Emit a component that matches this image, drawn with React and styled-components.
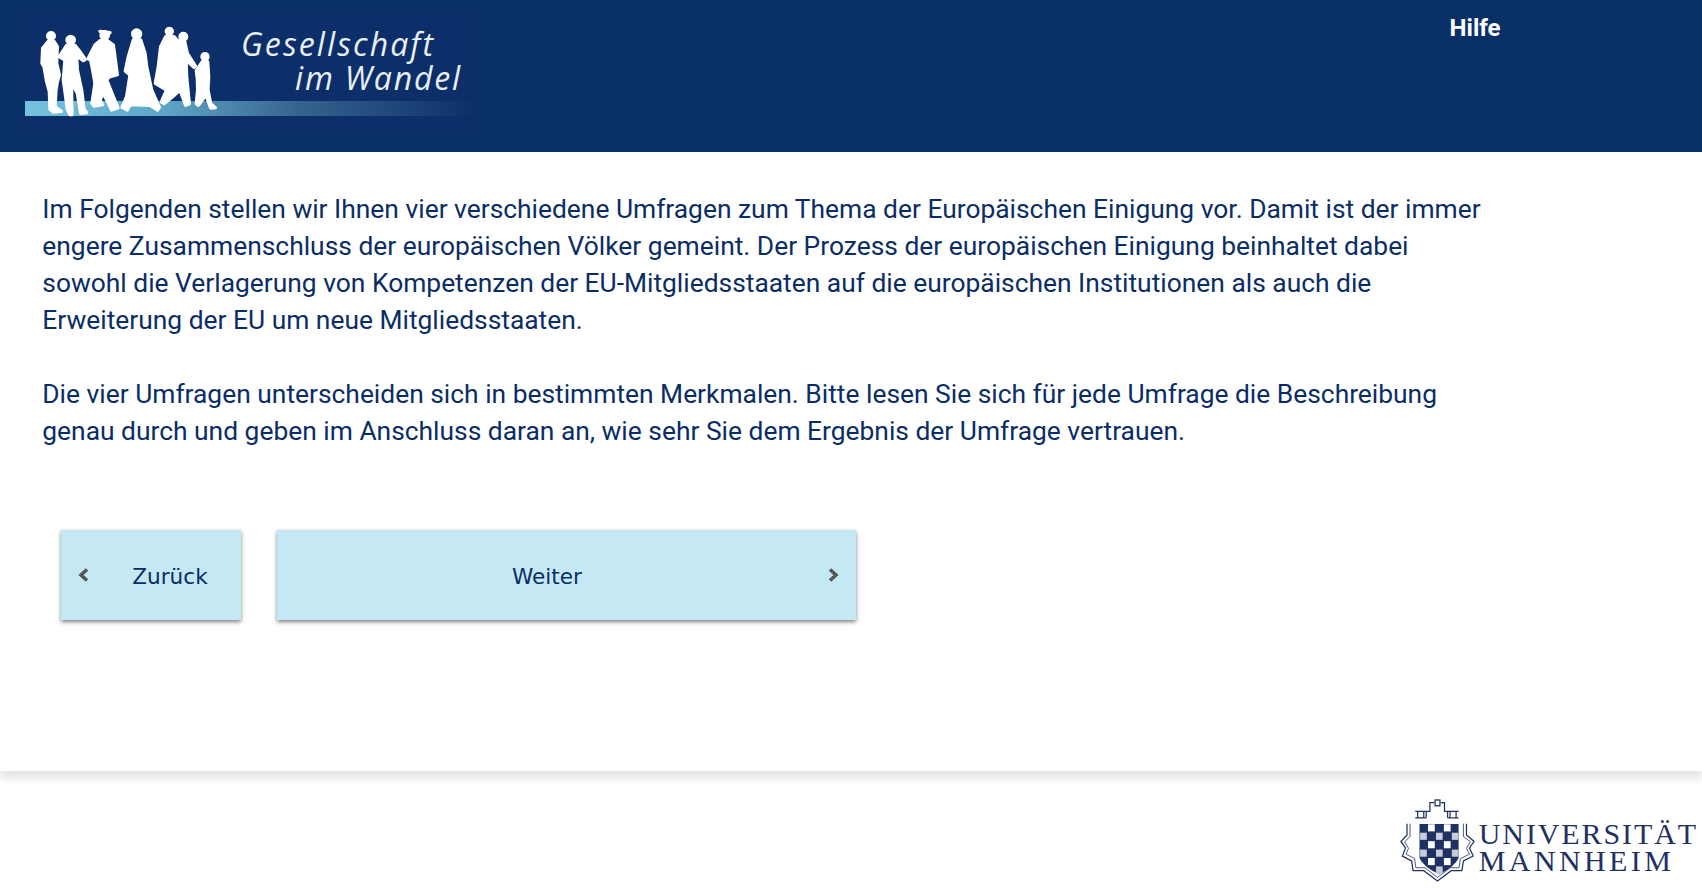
import React from 'react';
import styled, { createGlobalStyle } from 'styled-components';

const Global = createGlobalStyle`
    html, body { margin: 0; padding: 0; background: #fff; }
    body { font-family: Roboto, "Liberation Sans", sans-serif; color: #0a2d66; }
`

const Page = styled.div`
    display: flex;
    flex-direction: column;
    width: 1702px;
    height: 888px;
    overflow: hidden;
`

const Header = styled.header`
    display: flex;
    align-items: flex-start;
    flex: 0 0 152px;
    background: #083067;
`

const LogoBox = styled.svg`
    display: block;
    width: 460px;
    height: 125px;
    margin: 10px 0 0 20px;
`

const HelpLink = styled.a`
    margin: 13px 201.5px 0 auto;
    font-size: 24px;
    line-height: 30px;
    font-weight: 700;
    color: #fff;
    text-decoration: none;
`

const Main = styled.main`
    position: relative;
    z-index: 1;
    flex: 0 0 619px;
    box-sizing: border-box;
    padding: 39px 0 0 42.3px;
    background: #fff;
    box-shadow: 0 8px 8px rgba(0, 0, 0, 0.1);
`

const Text = styled.p`
    width: 1450px;
    margin: 0 0 37px;
    font-size: 26.38px;
    line-height: 37px;
    color: #0a2d66;
`

const Buttons = styled.div`
    display: flex;
    gap: 36px;
    margin: 80px 0 0 18.7px;
`

const NavButton = styled.button`
    display: flex;
    align-items: center;
    width: ${props => props.$width}px;
    height: 90px;
    box-sizing: border-box;
    padding: 0 15px;
    border: none;
    border-radius: 0;
    background: #c5e8f5;
    box-shadow: 0 2px 4px rgba(0, 0, 0, 0.5);
    font-family: "DejaVu Sans", sans-serif;
    font-size: 21.6px;
    color: #0a2d66;
`

const ButtonLabel = styled.span`
    flex: 1;
    text-align: center;
    padding: ${props => props.$back ? '2px 0 0 24px' : '2px 25px 0 0'};
`

const Chevron = styled.svg`
    display: block;
    flex: none;
    width: 14px;
    height: 18px;
`

const Footer = styled.footer`
    display: flex;
    flex: 1;
    justify-content: flex-end;
    align-items: flex-start;
    gap: 4px;
    padding: 28px 4px 0 0;
`

const Crest = styled.svg`
    display: block;
    flex: none;
    width: 75px;
    height: 83px;
`

const UniName = styled.div`
    margin-top: 21px;
    font-family: "Liberation Serif", serif;
    font-size: 30px;
    line-height: 27px;
    color: #1f3162;
    white-space: nowrap;
`

const UniLine = styled.div`
    letter-spacing: ${props => props.$spacing}px;
`

const crestSquares = [];
for (let r = 0; r < 6; r++) {
    for (let c = 0; c < 5; c++) {
        crestSquares.push({ r, c, dark: (r + c) % 2 === 0 });
    }
}

const Logo = () => (
    <LogoBox viewBox="20 10 460 125">
        <defs>
            <linearGradient id="band" x1="0" x2="1" y1="0" y2="0">
                <stop offset="0" stopColor="#74c3de" />
                <stop offset="0.3" stopColor="#5fa8c8" />
                <stop offset="0.6" stopColor="#37658f" />
                <stop offset="1" stopColor="#0c2f69" />
            </linearGradient>
        </defs>
        <rect x="25" y="12" width="450" height="120" fill="#0c2f69" />
        <rect x="25" y="101" width="450" height="15" fill="url(#band)" />
        <g transform="translate(20 10) scale(0.3333)" fill="#fff" stroke="#fff" strokeWidth="10" strokeLinejoin="round">
            <circle cx="93" cy="78" r="10" />
            <path d="M85 94 L102 94 L112 110 L110 160 L118 195 L112 215 L108 240 L105 290 L124 304 L100 306 L90 298 L88 245 L80 215 L72 170 L66 160 L68 115 Z" />
            <circle cx="152" cy="90" r="11" />
            <path d="M140 106 L165 106 L180 125 L196 148 L190 152 L170 136 L172 180 L185 240 L192 298 L200 308 L182 310 L172 250 L155 215 L155 260 L156 314 L150 314 L142 298 L135 245 L130 210 L135 150 L118 140 Z" />
            <circle cx="254" cy="76" r="11" />
            <path d="M240 64 L270 68 L262 72 Z" />
            <path d="M240 92 L262 92 L280 105 L292 194 L268 201 L260 210 L280 260 L294 294 L275 300 L250 250 L240 270 L248 284 L222 288 L216 280 L225 220 L218 180 L212 150 L204 146 L225 105 Z" />
            <circle cx="350" cy="72" r="12" />
            <path d="M340 90 L362 90 L375 130 L380 170 L395 240 L418 292 L413 300 L390 286 L330 284 L322 300 L306 292 L320 260 L330 195 L316 183 L325 140 Z" />
            <circle cx="448" cy="64" r="9" />
            <circle cx="490" cy="80" r="10" />
            <path d="M437 80 L462 80 L472 92 L494 94 L502 130 L526 168 L522 172 L498 150 L500 200 L508 281 L497 286 L480 240 L458 260 L432 281 L424 276 L440 240 L406 220 L415 170 L422 110 Z" />
            <circle cx="555" cy="140" r="9" />
            <path d="M547 155 L563 155 L566 200 L564 240 L572 281 L586 293 L572 294 L558 255 L535 286 L529 281 L533 240 L532 205 L529 182 Z" />
        </g>
        <text x="241" y="56" textLength="192" fontFamily="Open Sans" fontStyle="italic" fontSize="32" fill="#e9eef3">Gesellschaft</text>
        <text x="295" y="90" textLength="165" fontFamily="Open Sans" fontStyle="italic" fontSize="32" fill="#e9eef3">im Wandel</text>
    </LogoBox>
);

const UniCrest = () => (
    <Crest viewBox="22 24 246 256" preserveAspectRatio="none">
        <defs>
            <clipPath id="shield">
                <path d="M85 100 H215 V205 Q200 235 150 255 Q100 235 85 205 Z" />
            </clipPath>
        </defs>
        <g fill="none" stroke="#1f3162" strokeWidth="4">
            <path d="M45 100 V135 L25 155 L40 175 L30 200 L60 215 L65 245 L100 245 L145 277 L190 245 L225 245 L230 215 L262 200 L250 175 L265 155 L240 135 V100" />
            <path d="M55 100 V140 L37 156 L50 176 L42 194 L70 208 L74 236 L104 236 L145 266 L186 236 L216 236 L220 208 L250 194 L240 176 L253 156 L230 140 V100" strokeWidth="2.5" />
            <path d="M72 62 H108 V82 M72 82 H108 M80 62 V82 M100 62 V82 M108 62 H120 V35 H135 M155 35 H168 V62 H178 M178 82 H214 M178 62 H214 M186 62 V82 M206 62 V82 M178 62 V82" />
            <rect x="137" y="27" width="16" height="18" />
        </g>
        <g clipPath="url(#shield)">
            <rect x="85" y="100" width="130" height="155" fill="#1f3162" />
            {crestSquares.filter(s => !s.dark).map(s => (
                <rect key={`${s.r}-${s.c}`} x={88 + s.c * 26} y={102 + s.r * 26} width="22" height="22" fill={s.r % 2 ? '#c6ccd9' : '#fff'} />
            ))}
        </g>
    </Crest>
);

const App = () => {
    return (
        <Page>
            <Global />
            <Header>
                <Logo />
                <HelpLink href="#">Hilfe</HelpLink>
            </Header>
            <Main>
                <Text>
                    Im Folgenden stellen wir Ihnen vier verschiedene Umfragen zum Thema der Europäischen Einigung vor. Damit ist der immer engere Zusammenschluss der europäischen Völker gemeint. Der Prozess der europäischen Einigung beinhaltet dabei sowohl die Verlagerung von Kompetenzen der EU-Mitgliedsstaaten auf die europäischen Institutionen als auch die Erweiterung der EU um neue Mitgliedsstaaten.
                </Text>
                <Text>
                    Die vier Umfragen unterscheiden sich in bestimmten Merkmalen. Bitte lesen Sie sich für jede Umfrage die Beschreibung genau durch und geben im Anschluss daran an, wie sehr Sie dem Ergebnis der Umfrage vertrauen.
                </Text>
                <Buttons>
                    <NavButton $width={180}>
                        <Chevron viewBox="0 0 14 18"><path d="M11 3.5 L5 9 L11 14.5" fill="none" stroke="#555" strokeWidth="3.5" /></Chevron>
                        <ButtonLabel $back>Zurück</ButtonLabel>
                    </NavButton>
                    <NavButton $width={579}>
                        <ButtonLabel>Weiter</ButtonLabel>
                        <Chevron viewBox="0 0 14 18"><path d="M3 3.5 L9 9 L3 14.5" fill="none" stroke="#555" strokeWidth="3.5" /></Chevron>
                    </NavButton>
                </Buttons>
            </Main>
            <Footer>
                <UniCrest />
                <UniName>
                    <UniLine $spacing={1.9}>UNIVERSITÄT</UniLine>
                    <UniLine $spacing={3.4}>MANNHEIM</UniLine>
                </UniName>
            </Footer>
        </Page>
    );
}

export default App;
